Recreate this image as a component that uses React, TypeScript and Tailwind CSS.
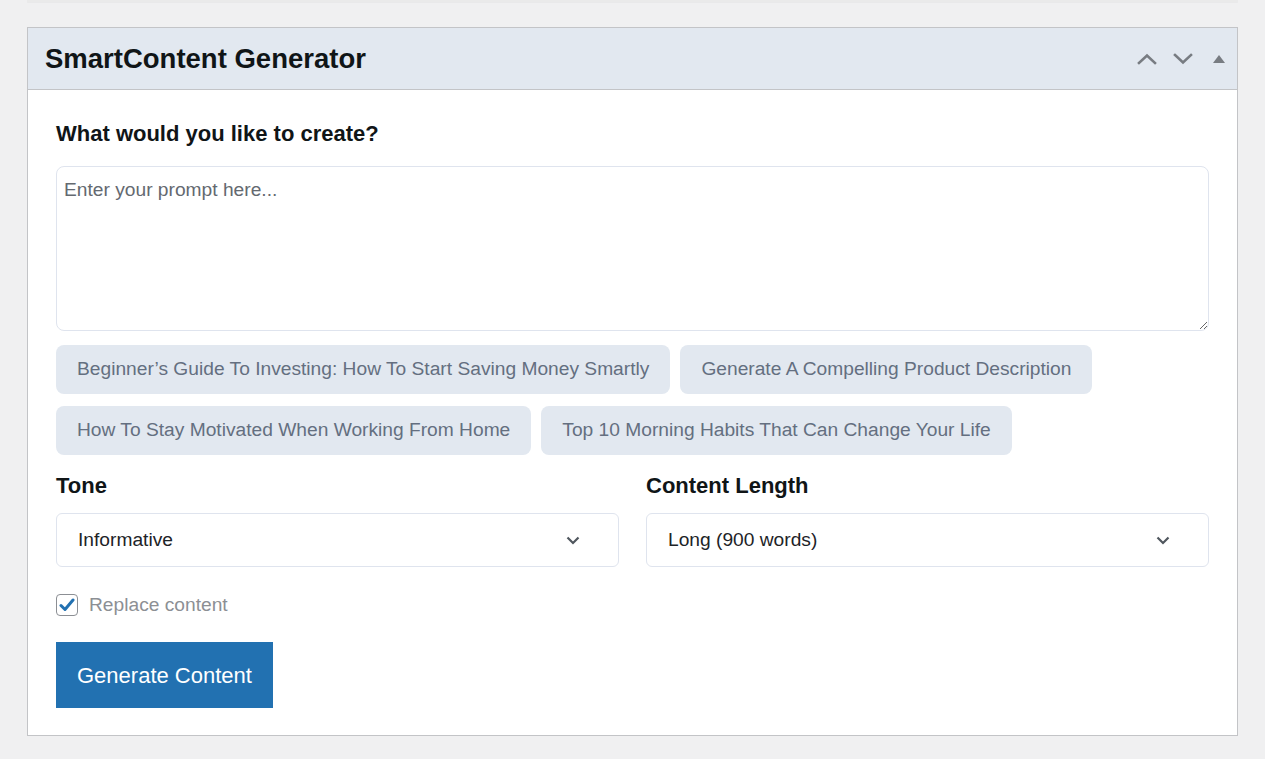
const chips = [
  ['Beginner’s Guide To Investing: How To Start Saving Money Smartly', 'Generate A Compelling Product Description'],
  ['How To Stay Motivated When Working From Home', 'Top 10 Morning Habits That Can Change Your Life'],
];

const Chevron = ({ dir }: { dir: 'up' | 'down' }) => (
  <svg width="20" height="12" viewBox="0 0 20 12" fill="none" stroke="#787c82" strokeWidth="2.6" strokeLinecap="square">
    {dir === 'up' ? <path d="M2 10 L10 2.5 L18 10" /> : <path d="M2 2 L10 9.5 L18 2" />}
  </svg>
);

const SelectBox = ({ value }: { value: string }) => (
  <div className="flex h-[54px] items-center justify-between rounded-[6px] border border-[#dfe4ee] bg-white pl-[21px] pr-[38px] text-[19.2px] text-[#1d2327]">
    <span>{value}</span>
    <svg width="14" height="9" viewBox="0 0 14 9" fill="none" stroke="#50575e" strokeWidth="2.2">
      <path d="M1.5 1.5 L7 7 L12.5 1.5" />
    </svg>
  </div>
);

export default function App() {
  return (
    <div className="min-h-screen bg-[#f0f0f1] px-[27px] font-['Liberation_Sans',Arial,sans-serif]">
      {/* previous box edge */}
      <div className="h-[2px] bg-[#eaeaea] shadow-[0_1px_1px_rgba(0,0,0,0.03)]" />

      <div className="mt-[25px] border border-[#c3c4c7] bg-white">
        <div className="flex h-[62px] items-center justify-between border-b border-[#c3c4c7] bg-[#e2e8f0] pl-[17px]">
          <h2 className="text-[27.5px] font-bold text-[#101517]">SmartContent Generator</h2>
          <div className="flex items-center">
            <button className="flex h-[36px] w-[36px] items-center justify-center">
              <Chevron dir="up" />
            </button>
            <button className="flex h-[36px] w-[36px] items-center justify-center">
              <Chevron dir="down" />
            </button>
            <button className="flex h-[36px] w-[36px] items-center justify-center">
              <svg width="12" height="8" viewBox="0 0 12 8">
                <path d="M6 0 L12 8 L0 8 Z" fill="#787c82" />
              </svg>
            </button>
          </div>
        </div>

        <div className="px-[28px] pb-[27px] pt-[29px]">
          <label className="block text-[22px] font-bold leading-[29px] text-[#101517]">What would you like to create?</label>
          <textarea
            className="mt-[18px] block h-[165px] w-full rounded-[8px] border border-[#dfe4ee] px-[7px] py-[9px] text-[19.2px] text-[#1d2327] outline-none placeholder:text-[#646970]"
            placeholder="Enter your prompt here..."
          />

          <div className="mt-[14px] flex flex-col gap-[12px]">
            {chips.map((row, i) => (
              <div key={i} className="flex gap-[10px]">
                {row.map((c) => (
                  <button
                    key={c}
                    className="h-[49px] rounded-[8px] bg-[#e2e8f0] px-[21px] text-[19.2px] text-[#646f80]"
                  >
                    {c}
                  </button>
                ))}
              </div>
            ))}
          </div>

          <div className="mt-[16px] grid grid-cols-2 gap-[27px]">
            <div>
              <div className="text-[22px] font-bold leading-[30px] text-[#101517]">Tone</div>
              <div className="mt-[12px]">
                <SelectBox value="Informative" />
              </div>
            </div>
            <div>
              <div className="text-[22px] font-bold leading-[30px] text-[#101517]">Content Length</div>
              <div className="mt-[12px]">
                <SelectBox value="Long (900 words)" />
              </div>
            </div>
          </div>

          <div className="mt-[26px] flex h-[24px] items-center gap-[11px]">
            <span className="flex h-[22px] w-[22px] items-center justify-center rounded-[4px] border border-[#8c8f94] bg-white">
              <svg width="16" height="14" viewBox="0 0 16 14" fill="none" stroke="#2271b1" strokeWidth="3" strokeLinecap="round" strokeLinejoin="round">
                <path d="M2 7.5 L6 11.5 L14 2" />
              </svg>
            </span>
            <span className="text-[19.2px] text-[#8c8f94]">Replace content</span>
          </div>

          <button className="mt-[25px] h-[66px] bg-[#2271b1] px-[21px] text-[22px] text-white">Generate Content</button>
        </div>
      </div>
    </div>
  );
}
